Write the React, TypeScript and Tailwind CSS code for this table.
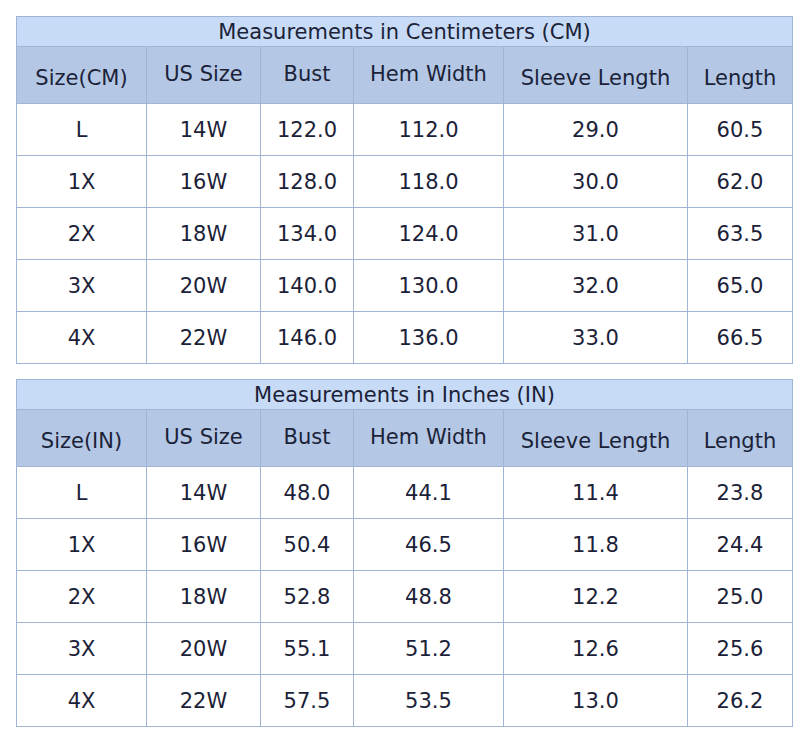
import React from 'react';

type Table = {
  title: string;
  sizeLabel: string;
  rows: string[][];
};

const tables: Table[] = [
  {
    title: 'Measurements in Centimeters (CM)',
    sizeLabel: 'Size(CM)',
    rows: [
      ['L', '14W', '122.0', '112.0', '29.0', '60.5'],
      ['1X', '16W', '128.0', '118.0', '30.0', '62.0'],
      ['2X', '18W', '134.0', '124.0', '31.0', '63.5'],
      ['3X', '20W', '140.0', '130.0', '32.0', '65.0'],
      ['4X', '22W', '146.0', '136.0', '33.0', '66.5'],
    ],
  },
  {
    title: 'Measurements in Inches (IN)',
    sizeLabel: 'Size(IN)',
    rows: [
      ['L', '14W', '48.0', '44.1', '11.4', '23.8'],
      ['1X', '16W', '50.4', '46.5', '11.8', '24.4'],
      ['2X', '18W', '52.8', '48.8', '12.2', '25.0'],
      ['3X', '20W', '55.1', '51.2', '12.6', '25.6'],
      ['4X', '22W', '57.5', '53.5', '13.0', '26.2'],
    ],
  },
];

const SizeTable: React.FC<{ table: Table }> = ({ table }) => {
  const headers = [table.sizeLabel, 'US Size', 'Bust', 'Hem Width', 'Sleeve Length', 'Length'];
  // some header labels sit a little higher than others in the original
  const raised = [false, true, true, true, false, false];

  return (
    <div className="grid w-[777px] grid-cols-[129px_113px_92px_149px_183px_104px] gap-px border border-[#a0b4d5] bg-[#a0b4d5]">
      {/* Title */}
      <div className="col-span-6 flex h-[29px] items-center justify-center bg-[#c7dbf7] pt-[2px]">
        {table.title}
      </div>

      {/* Header */}
      {headers.map((h, i) => (
        <div
          key={h}
          className={`flex h-[56px] items-center justify-center bg-[#b4c8e5] ${
            raised[i] ? 'pb-[2px]' : 'pt-[6px]'
          }`}
        >
          {h}
        </div>
      ))}

      {/* Rows */}
      {table.rows.map((row) =>
        row.map((cell, i) => (
          <div
            key={`${row[0]}-${i}`}
            className="flex h-[51px] items-center justify-center bg-white pt-[2px]"
          >
            {cell}
          </div>
        ))
      )}
    </div>
  );
};

const App: React.FC = () => {
  return (
    <div className="flex min-h-screen flex-col gap-[15px] bg-white pl-4 pt-4 font-['DejaVu_Sans',Verdana,sans-serif] text-[21px] leading-none text-[#1b2238]">
      {tables.map((t) => (
        <SizeTable key={t.title} table={t} />
      ))}
    </div>
  );
};

export default App;
